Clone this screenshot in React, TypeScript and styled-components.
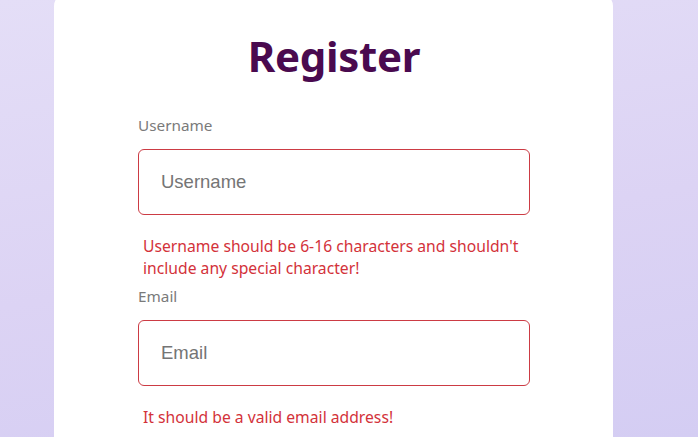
import { createGlobalStyle } from "styled-components";
import styled from "styled-components";

const GlobalStyle = createGlobalStyle`
  html, body {
    margin: 0;
    padding: 0;
    height: 100%;
  }

  body {
    font-family: "Noto Sans", "Open Sans", sans-serif;
    background: linear-gradient(170deg, #e4def7 0%, #dcd3f4 55%, #d4cdf3 100%);
    overflow: hidden;
  }
`;

interface Field {
  name: string;
  label: string;
  type: string;
  error: string;
}

const fields: Field[] = [
  {
    name: "username",
    label: "Username",
    type: "text",
    error:
      "Username should be 6-16 characters and shouldn't include any special character!",
  },
  {
    name: "email",
    label: "Email",
    type: "email",
    error: "It should be a valid email address!",
  },
  {
    name: "birthday",
    label: "Birthday",
    type: "text",
    error: "",
  },
];

const App = () => {
  return (
    <>
      <GlobalStyle />
      <Page>
        <Card onSubmit={(e) => e.preventDefault()}>
          <Title>Register</Title>
          {fields.map((field) => (
            <FormGroup key={field.name}>
              <Label htmlFor={field.name}>{field.label}</Label>
              <Input
                id={field.name}
                name={field.name}
                type={field.type}
                placeholder={field.label}
              />
              {field.error && <ErrorText>{field.error}</ErrorText>}
            </FormGroup>
          ))}
        </Card>
      </Page>
    </>
  );
};

const Page = styled.div`
  display: flex;
  align-items: flex-start;
  height: 437px;
  padding-left: 54px;
`;

const Card = styled.form`
  display: flex;
  flex-direction: column;
  width: 559px;
  box-sizing: border-box;
  margin-top: -6px;
  padding: 38px 83px 40px 84px;
  background-color: #fff;
  border-radius: 12px;
`;

const Title = styled.h1`
  margin: 0 0 35px;
  text-align: center;
  font-size: 42px;
  line-height: 48px;
  font-weight: 700;
  letter-spacing: -0.3px;
  color: #4a0a4f;
`;

const FormGroup = styled.div`
  display: flex;
  flex-direction: column;
  margin-bottom: 7px;
`;

const Label = styled.label`
  font-size: 15.3px;
  line-height: 20px;
  color: #7a7a7a;
  margin-bottom: 14px;
`;

const Input = styled.input`
  height: 66px;
  box-sizing: border-box;
  padding: 0 22px;
  border: 1px solid #cc3b44;
  border-radius: 6px;
  font-family: "Liberation Sans", Arial, sans-serif;
  font-size: 18.5px;
  color: #333;
  outline: none;

  &::placeholder {
    color: #757575;
  }
`;

const ErrorText = styled.span`
  margin-top: 20px;
  padding-left: 5px;
  font-size: 15.7px;
  line-height: 22px;
  color: #d3323a;
`;

export default App;
